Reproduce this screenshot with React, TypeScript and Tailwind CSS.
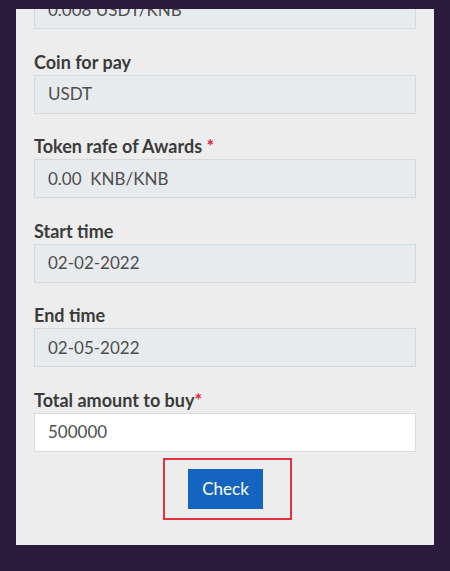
import React from "react";

type Field = {
  label?: string;
  value: string;
  required?: "spaced" | "tight";
  editable?: boolean;
};

const fields: Field[] = [
  { value: "0.008 USDT/KNB" },
  { label: "Coin for pay", value: "USDT" },
  { label: "Token rafe of Awards", value: "0.00\u00a0\u00a0KNB/KNB", required: "spaced" },
  { label: "Start time", value: "02-02-2022" },
  { label: "End time", value: "02-05-2022" },
  { label: "Total amount to buy", value: "500000", required: "tight", editable: true },
];

function FormField({ field }: { field: Field }) {
  return (
    <div className="flex flex-col">
      {field.label && (
        <label className="text-[18px] leading-[24px] font-bold text-[#3b3b3b] mb-px">
          {field.label}
          {field.required === "spaced" && <span className="text-[#e0263e]"> *</span>}
          {field.required === "tight" && <span className="text-[#e0263e]">*</span>}
        </label>
      )}
      <div
        className={
          "h-[39px] flex items-center pl-[13px] pr-[14px] border text-[17px] text-[#4e4e4e] " +
          (field.editable ? "bg-white border-[#dadada]" : "bg-[#e8ebee] border-[#d6d9dc]")
        }
      >
        {field.value}
      </div>
    </div>
  );
}

export default function App() {
  return (
    <div
      className="w-[450px] h-[571px] bg-[#2b1a3b] pt-[9px] px-[16px]"
      style={{ fontFamily: "Lato, 'Open Sans', sans-serif" }}
    >
      <div className="h-[536px] bg-[#ededed] overflow-hidden">
        <div className="-mt-[19px] px-[18px] flex flex-col gap-[20.5px]">
          {fields.map((f, i) => (
            <FormField key={i} field={f} />
          ))}
        </div>
        <div className="flex justify-center mt-[6px] pl-[5px]">
          <div className="w-[129px] h-[62px] border-2 border-[#e3323f] flex items-center justify-center pr-[4px]">
            <button className="w-[75px] h-[40px] bg-[#1565c0] text-white text-[17px]">
              Check
            </button>
          </div>
        </div>
      </div>
    </div>
  );
}
